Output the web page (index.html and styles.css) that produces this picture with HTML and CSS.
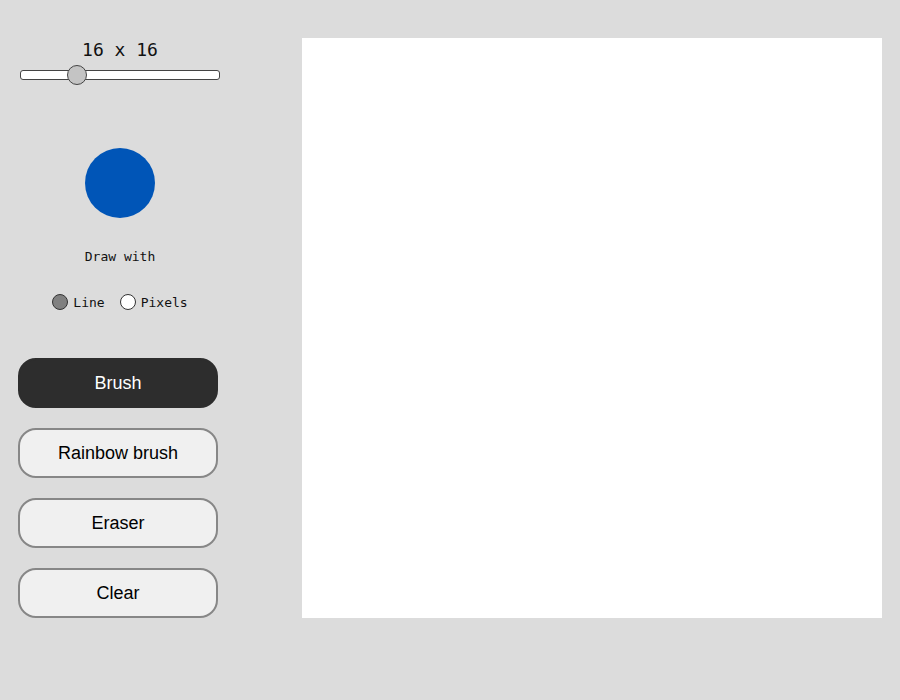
FILE: index.html
```html
<!DOCTYPE html>
<html>
<head>
<meta charset="utf-8">
<link rel="stylesheet" href="styles.css">
</head>
<body>
<div class="app">
  <aside class="panel">
    <div class="size-label">16 x 16</div>
    <input class="size-slider" type="range" min="4" max="50" value="16">
    <div class="color-swatch"></div>
    <div class="draw-label">Draw with</div>
    <div class="mode-row">
      <label class="mode"><input type="radio" name="mode" checked><span>Line</span></label>
      <label class="mode"><input type="radio" name="mode"><span>Pixels</span></label>
    </div>
    <div class="tools">
      <button class="tool active">Brush</button>
      <button class="tool">Rainbow brush</button>
      <button class="tool">Eraser</button>
      <button class="tool">Clear</button>
    </div>
  </aside>
  <main class="board"></main>
</div>
</body>
</html>
```

FILE: styles.css
```css
html, body {
  margin: 0;
  padding: 0;
  background: #dcdcdc;
}
body {
  width: 900px;
  height: 700px;
  overflow: hidden;
}
.app {
  display: flex;
  align-items: flex-start;
  padding: 38px 0 0 18px;
  gap: 80px;
}
.panel {
  width: 204px;
  display: flex;
  flex-direction: column;
  align-items: center;
}
.size-label {
  font-family: "DejaVu Sans Mono", "Liberation Mono", monospace;
  font-size: 18px;
  line-height: 24px;
  height: 24px;
  color: #111;
}
.size-slider {
  -webkit-appearance: none;
  appearance: none;
  width: 200px;
  height: 20px;
  margin: 3px 0 0 0;
  padding: 0;
  background: transparent;
}
.size-slider::-webkit-slider-runnable-track {
  height: 10px;
  box-sizing: border-box;
  background: #fff;
  border: 1px solid #444;
  border-radius: 3px;
}
.size-slider::-webkit-slider-thumb {
  -webkit-appearance: none;
  appearance: none;
  width: 20px;
  height: 20px;
  margin-top: -6px;
  border-radius: 50%;
  background: #c4c4c4;
  border: 1px solid #444;
  box-sizing: border-box;
}
.color-swatch {
  width: 70px;
  height: 70px;
  border-radius: 50%;
  background: #0055b7;
  margin-top: 63px;
}
.draw-label {
  font-family: "DejaVu Sans Mono", "Liberation Mono", monospace;
  font-size: 13px;
  line-height: 16px;
  margin-top: 31px;
  color: #111;
}
.mode-row {
  display: flex;
  gap: 15px;
  margin-top: 29px;
  font-family: "DejaVu Sans Mono", "Liberation Mono", monospace;
  font-size: 13px;
  color: #111;
}
.mode {
  display: flex;
  align-items: center;
  gap: 5px;
}
.mode input {
  -webkit-appearance: none;
  appearance: none;
  width: 16px;
  height: 16px;
  margin: 0;
  border-radius: 50%;
  border: 1px solid #333;
  background: #fff;
  box-sizing: border-box;
}
.mode input:checked {
  background: #808080;
}
.tools {
  display: flex;
  flex-direction: column;
  gap: 20px;
  margin-top: 48px;
  align-self: flex-start;
}
.tool {
  width: 200px;
  height: 50px;
  box-sizing: border-box;
  border: 2px solid #878787;
  border-radius: 18px;
  background: #f0f0f0;
  color: #000;
  font-family: "Liberation Sans", Arial, sans-serif;
  font-size: 18px;
  padding: 0;
}
.tool.active {
  background: #2d2d2d;
  border-color: #2d2d2d;
  color: #fff;
}
.board {
  width: 580px;
  height: 580px;
  background: #fff;
}
```
